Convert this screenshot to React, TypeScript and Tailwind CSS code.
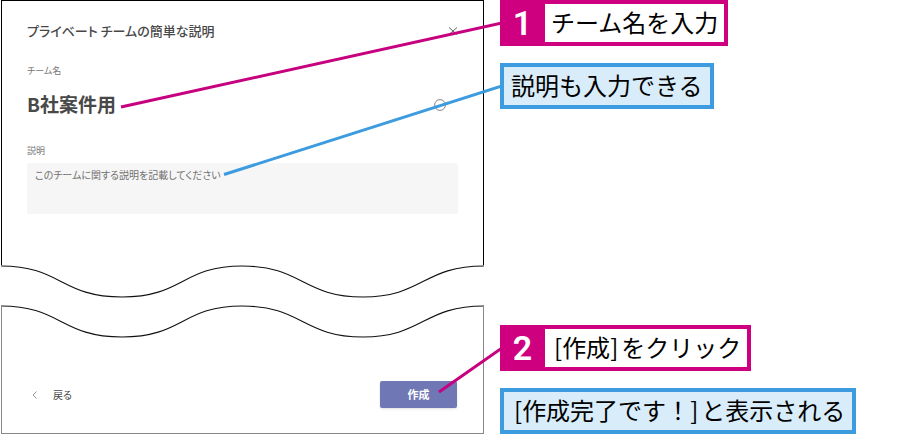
import type { ReactNode } from "react";

function StepCallout({ step, children }: { step: number; children: ReactNode }) {
  return (
    <div className="flex h-[46px] w-fit items-stretch border-4 border-[#cf0080] bg-[#cf0080]">
      <span className="flex w-[41px] items-center justify-center pr-1 font-[Roboto,sans-serif] text-[34px] leading-none font-semibold text-white">
        {step}
      </span>
      <span className="flex items-center bg-white px-[6px] pb-[2px] text-2xl leading-none whitespace-nowrap">{children}</span>
    </div>
  );
}

function NoteCallout({ children }: { children: ReactNode }) {
  return (
    <div className="flex h-[46px] w-fit items-center border-4 border-[#3c9cdf] bg-[#d8ecf9] px-[7px] pb-[2px] text-2xl leading-none whitespace-nowrap">
      {children}
    </div>
  );
}

function Quoted({ children }: { children: ReactNode }) {
  return <span className="px-[3px]">[{children}]</span>;
}

function Wave() {
  return (
    <svg className="block h-[33px] w-full" viewBox="0 0 483 33" preserveAspectRatio="none" fill="none" stroke="#111" strokeWidth="1.1" aria-hidden="true">
      <path d="M0 1 C60 1 60 32 121 32 S181 1 241 1 S302 32 362 32 S422 1 483 1" />
    </svg>
  );
}

export default function App() {
  return (
    <main className="relative flex gap-4 bg-white pl-px font-['Liberation_Sans','Noto_Sans_CJK_JP',sans-serif] text-black">
      <section className="flex w-[483px] shrink-0 flex-col font-['Noto_Sans_CJK_JP',sans-serif] text-[#484848] [font-feature-settings:'palt']">
        <div className="flex h-[265px] flex-col border-x border-t border-black px-[25px] pt-5">
          <header className="flex h-5 items-center justify-between">
            <h1 className="text-[13px] leading-5 font-medium">プライベート チームの簡単な説明</h1>
            <button type="button" aria-label="閉じる" className="flex h-5 w-[10px] items-center">
              <svg width="10" height="8" viewBox="0 0 10 8" fill="none" stroke="#555" strokeWidth="0.9">
                <path d="M1 .5l8 7M9 .5L1 7.500" />
              </svg>
            </button>
          </header>
          <label htmlFor="team" className="mt-[22px] text-[9px] leading-4 text-[#777]">チーム名</label>
          <div className="mt-2 flex h-8 items-end justify-between pr-3">
            <input id="team" defaultValue="B社案件用" className="h-8 w-40 bg-transparent text-[19px] font-bold outline-none" />
            <svg className="mb-2" width="12" height="12" viewBox="0 0 12 12" fill="none" stroke="#777" strokeWidth="0.9" aria-hidden="true">
              <circle cx="6" cy="6" r="5.4" />
            </svg>
          </div>
          <label htmlFor="description" className="mt-6 text-[9px] leading-4 text-[#777]">説明</label>
          <textarea
            id="description"
            placeholder="このチームに関する説明を記載してください"
            className="mt-1 block h-[51px] w-full resize-none rounded-xs bg-[#f6f6f6] px-2 py-1 text-[10px] leading-4 outline-none placeholder:text-[#707070]"
          />
        </div>
        <Wave />
        <div className="h-[7px]" />
        <Wave />
        <footer className="-mt-8 flex h-[128px] items-end justify-between border-x border-b border-[#888] pr-[26px] pb-[25px] pl-[30px]">
          <button type="button" className="flex h-[27px] items-center gap-4 text-[10px]">
            <svg width="5" height="8" viewBox="0 0 5 8" fill="none" stroke="#888" strokeWidth="0.9" aria-hidden="true">
              <path d="M4.500 .5L1 4l3.500 3.500" />
            </svg>
            戻る
          </button>
          <button type="button" className="h-[27px] w-[77px] rounded-xs bg-[#6f77b5] text-[11px] font-bold text-white shadow-sm">
            作成
          </button>
        </footer>
      </section>
      <aside className="flex flex-col font-['Noto_Sans_CJK_JP',sans-serif]">
        <StepCallout step={1}>チーム名を入力</StepCallout>
        <div className="mt-[17px]">
          <NoteCallout>説明も入力できる</NoteCallout>
        </div>
        <div className="mt-auto flex flex-col gap-[17px]">
          <StepCallout step={2}><Quoted>作成</Quoted>をクリック</StepCallout>
          <NoteCallout><Quoted>作成完了です！</Quoted>と表示される</NoteCallout>
        </div>
      </aside>
      <svg className="pointer-events-none absolute top-0 left-0" width="502" height="434" fill="none" strokeWidth="3" aria-hidden="true">
        <path d="M121 107L502 23M439 392L502 348" stroke="#c6007e" />
        <path d="M224 174.500L502 86" stroke="#3c9cdf" />
      </svg>
    </main>
  );
}
